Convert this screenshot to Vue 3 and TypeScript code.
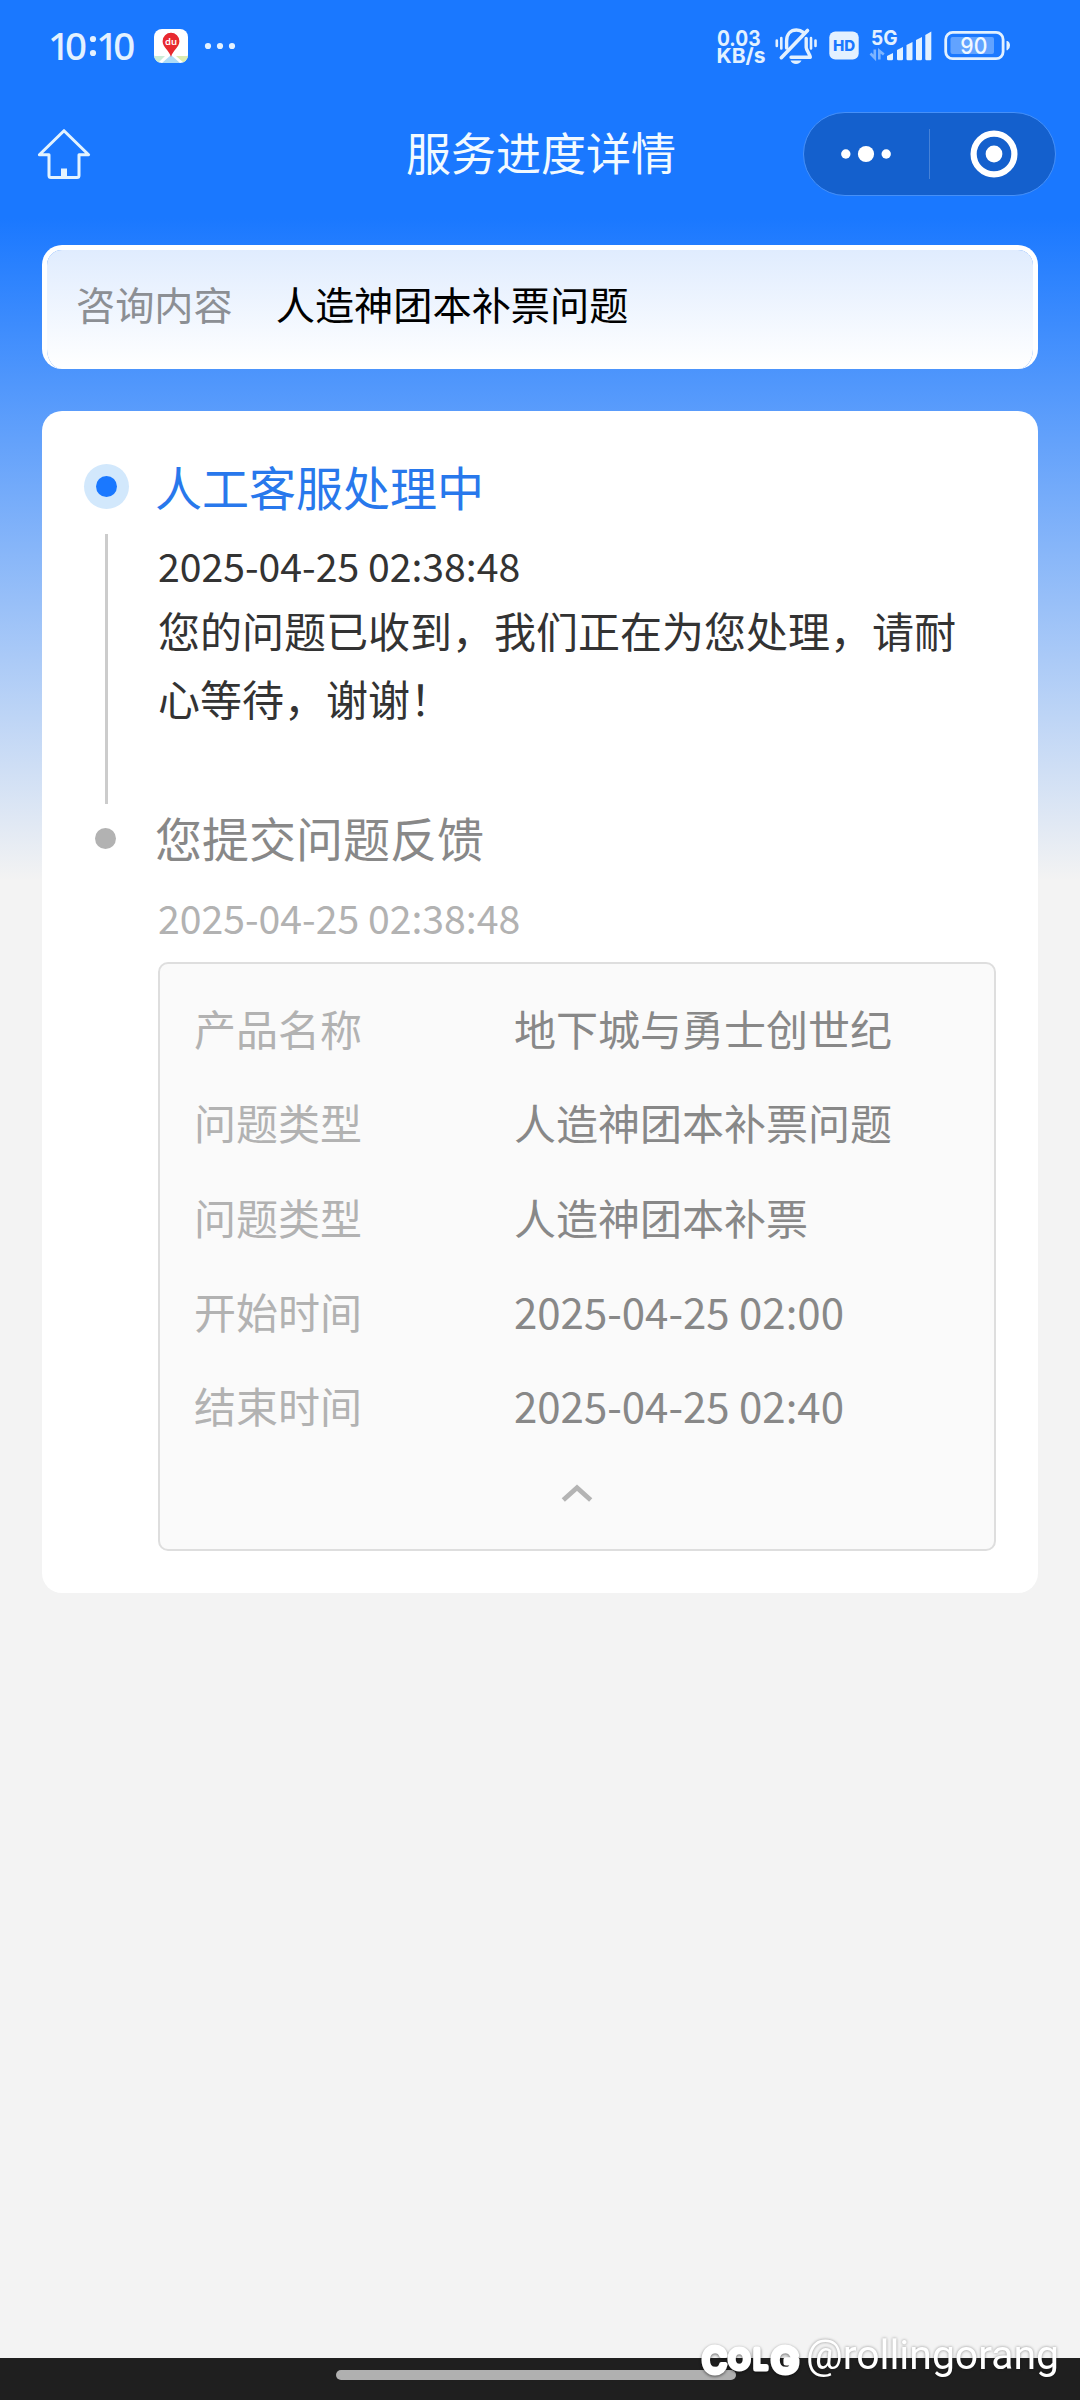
<script setup lang="ts">
import { ref } from 'vue'

interface Field {
  label: string
  value: string
}

const open = ref(true)

const fields: Field[] = [
  { label: '产品名称', value: '地下城与勇士创世纪' },
  { label: '问题类型', value: '人造神团本补票问题' },
  { label: '问题类型', value: '人造神团本补票' },
  { label: '开始时间', value: '2025-04-25 02:00' },
  { label: '结束时间', value: '2025-04-25 02:40' },
]
</script>

<template>
  <div class="screen">
    <header class="status">
      <svg class="clock" width="94" height="64" viewBox="44 14 94 64">
        <g fill="#e3f1ff" font-size="38.5" font-weight="500">
          <text x="48 65" y="59.6">10</text>
          <circle cx="93" cy="39" r="3.1" />
          <circle cx="93" cy="53" r="3.1" />
          <text x="96.3 113.3" y="59.6">10</text>
        </g>
      </svg>
      <svg class="app" width="34" height="34" viewBox="0 0 34 34">
        <defs><clipPath id="appClip"><rect width="34" height="34" rx="8" /></clipPath></defs>
        <g clip-path="url(#appClip)">
          <rect width="34" height="34" fill="#fff" />
          <path d="M0 27H11L4 34H0Z" fill="#c9ecd6" />
          <path d="M17 26L26 34H8Z" fill="#aedcf6" />
          <path d="M22 27H34V34H30Z" fill="#dcecb0" />
          <path d="M17 28C15 21 8.6 18 8.6 12.2A8.4 8.4 0 0 1 25.4 12.2C25.4 18 19 21 17 28Z" fill="#e8292f" />
          <text x="17" y="16" text-anchor="middle" font-size="9.5" font-weight="600" fill="#fff">du</text>
        </g>
      </svg>
      <svg class="more" width="32" height="8" viewBox="0 0 32 8" fill="#e3f1ff">
        <circle cx="4" cy="4" r="3.1" /><circle cx="16" cy="4" r="3.1" /><circle cx="28" cy="4" r="3.1" />
      </svg>

      <svg class="indicators" width="296" height="44" viewBox="716 24 296 44">
        <g fill="#e3f1ff">
          <g font-weight="700" font-size="21.5">
            <text x="717" y="45.8" textLength="43.5" lengthAdjust="spacingAndGlyphs">0.03</text>
            <text x="716.5" y="63.3" font-size="20.5" textLength="49" lengthAdjust="spacingAndGlyphs">KB/s</text>
          </g>
          <g fill="none" stroke="#e3f1ff" stroke-width="3" stroke-linecap="round" stroke-linejoin="round">
            <path d="M776.8 40.5V46M781.3 38V48.5M811 38V48.5M815.5 40.5V46" stroke-width="2.6" />
            <path d="M786.6 48V41C786.6 34 790.8 30 796.5 30C799.3 30 801.6 31 803.2 32.4" stroke-width="3.4" />
            <path d="M806.2 38.5V47.5C806.2 50 809.8 54 810.3 57.3H791" stroke-width="3.4" />
            <path d="M807.5 30.5L781.3 57.7" stroke-width="3.6" />
          </g>
          <path d="M790.5 60.6H801.5C800.5 62.8 798.6 64 796 64S791.5 62.8 790.5 60.6Z" />
          <rect x="829.3" y="31.6" width="29.4" height="28" rx="6" />
          <text x="833" y="51" font-size="14.8" font-weight="800" fill="#1a78ff" textLength="22.2" lengthAdjust="spacingAndGlyphs">HD</text>
          <text x="871" y="44.6" font-size="20.5" font-weight="700" textLength="26.5" lengthAdjust="spacingAndGlyphs">5G</text>
          <g fill="none" stroke="#7db4ff" stroke-width="2.6">
            <path d="M870.5 53.5L874.8 58V49.5M879.3 59.5V50.8L883.8 54.6" />
          </g>
          <path d="M887 56L893 53V59Q893 60.3 891.8 60.3H888.2Q887 60.3 887 59Z" />
          <path d="M897 50L903 47V59Q903 60.3 901.8 60.3H898.2Q897 60.3 897 59Z" />
          <path d="M906.5 45L912.5 42V59Q912.5 60.3 911.3 60.3H907.7Q906.5 60.3 906.5 59Z" />
          <path d="M916 40L922 37V59Q922 60.3 920.8 60.3H917.2Q916 60.3 916 59Z" />
          <path d="M925.3 35L931.3 31.5V59Q931.3 60.3 930.1 60.3H926.5Q925.3 60.3 925.3 59Z" />
          <rect x="945.7" y="32.4" width="57.4" height="26.3" rx="7" fill="none" stroke="#e3f1ff" stroke-width="2.8" />
          <rect x="950.5" y="37" width="43.5" height="17" rx="2" fill="#62a3ff" />
          <text x="960.3" y="54" font-size="23.5" font-weight="500" fill="#f0f8ff" textLength="27" lengthAdjust="spacingAndGlyphs">90</text>
          <path d="M1006.5 41H1007.5Q1010 42 1010 45.5T1007.5 50.3H1006.5Z" />
        </g>
      </svg>
    </header>

    <nav class="nav">
      <svg class="home" width="54" height="52" viewBox="37 128 54 52" fill="none" stroke="#e3f3ff" stroke-width="3" stroke-linejoin="round">
        <path d="M64 130.7L88.6 154.8H79V175.5Q79 177.5 77 177.5H51Q49 177.5 49 175.5V154.8H39.4Z" />
        <path d="M61 168.5H67V177H61Z" fill="#e3f3ff" stroke="none" />
      </svg>
      <h1 class="title">服务进度详情</h1>
      <div class="capsule">
        <div class="half">
          <svg width="50" height="18" viewBox="0 0 50 18" fill="#fff">
            <circle cx="4.8" cy="9" r="4.7" /><circle cx="25" cy="9" r="8.1" /><circle cx="45.2" cy="9" r="4.7" />
          </svg>
        </div>
        <i class="split" />
        <div class="half target">
          <svg width="48" height="48" viewBox="0 0 48 48">
            <circle cx="24" cy="24" r="20.4" fill="none" stroke="#fff" stroke-width="6.2" />
            <circle cx="24" cy="24" r="8.4" fill="#fff" />
          </svg>
        </div>
      </div>
    </nav>

    <main class="content">
      <section class="topic">
        <span class="topic-label">咨询内容</span>
        <span class="topic-text">人造神团本补票问题</span>
      </section>

      <section class="timeline">
        <article class="step current">
          <div class="rail">
            <i class="ring"><i class="dot" /></i>
            <i class="line" />
          </div>
          <div class="body">
            <h2>人工客服处理中</h2>
            <time>2025-04-25 02:38:48</time>
            <p>您的问题已收到，我们正在为您处理，请耐心等待，谢谢！</p>
          </div>
        </article>

        <article class="step past">
          <div class="rail"><i class="dot" /></div>
          <div class="body">
            <h2>您提交问题反馈</h2>
            <time>2025-04-25 02:38:48</time>
            <div class="detail">
              <template v-if="open">
                <div v-for="(f, i) in fields" :key="i" class="row">
                  <span class="k">{{ f.label }}</span>
                  <span class="v">{{ f.value }}</span>
                </div>
              </template>
              <div class="toggle" @click="open = !open">
                <svg width="32" height="20" viewBox="0 0 32 20" fill="none" stroke="#b4b4b4" stroke-width="4.8">
                  <path d="M2.3 17L16 4.8L29.7 17" />
                </svg>
              </div>
            </div>
          </div>
        </article>
      </section>
    </main>

    <footer class="gesture"><i class="pill" /></footer>

    <svg class="mark" width="380" height="60" viewBox="696 2332 380 60">
      <g fill="#fff" stroke="#fff" stroke-width="5" stroke-linejoin="round" font-weight="500" class="logo">
        <text x="702" y="2372.5" font-size="36" textLength="25" lengthAdjust="spacingAndGlyphs">C</text>
        <text x="728.5" y="2369" font-size="27" textLength="21.5" lengthAdjust="spacingAndGlyphs">O</text>
        <text x="753.5" y="2369" font-size="27" textLength="14" lengthAdjust="spacingAndGlyphs">L</text>
        <text x="771" y="2372.5" font-size="36" textLength="28" lengthAdjust="spacingAndGlyphs">G</text>
      </g>
      <text class="user" x="806" y="2369" font-size="41" textLength="253" lengthAdjust="spacingAndGlyphs" fill="#fff">@rollingorang</text>
    </svg>
  </div>
</template>

<style>
body {
  margin: 0;
  background: #f3f3f3;
}
</style>

<style scoped>
.screen {
  position: relative;
  box-sizing: border-box;
  display: flex;
  flex-direction: column;
  width: 1080px;
  height: 2400px;
  overflow: hidden;
  background: linear-gradient(180deg, #1a78ff 0, #1a78ff 218px, #f3f3f3 880px);
  font-family: 'Noto Sans CJK SC', 'Noto Sans', sans-serif;
}
i {
  display: block;
}
svg {
  display: block;
  flex: none;
}
.status {
  display: flex;
  align-items: center;
  height: 92px;
  padding: 0 68px 0 44px;
  font-family: Inter, 'Noto Sans', sans-serif;
}
.clock {
  font-family: 'Noto Sans', sans-serif;
}
.app {
  margin-left: 16px;
  font-family: 'Noto Sans', sans-serif;
}
.more {
  margin-left: 16px;
}
.indicators {
  margin-left: auto;
}
.nav {
  display: flex;
  align-items: center;
  justify-content: space-between;
  height: 124px;
  padding: 0 24px 0 37px;
}
.home {
  margin-right: 204px;
}
.title {
  margin: 0 0 4px;
  font-size: 45px;
  line-height: 60px;
  font-weight: 400;
  color: #f2faff;
  transform: translateX(-8px);
}
.capsule {
  box-sizing: border-box;
  display: flex;
  align-items: center;
  width: 253px;
  height: 84px;
  border: 1px solid #4690f8;
  border-radius: 42px;
  background: #1460cd;
}
.half {
  flex: 1;
  display: flex;
  justify-content: center;
}
.target {
  box-sizing: border-box;
  padding-left: 4px;
  flex: none;
  width: 125px;
}
.split {
  width: 1px;
  height: 50px;
  background: #4682d8;
}
.content {
  display: flex;
  flex-direction: column;
  gap: 42px;
  padding: 29px 42px 0;
}
.topic {
  box-sizing: border-box;
  display: flex;
  align-items: center;
  gap: 43px;
  height: 124px;
  padding: 0 30px 13px 29px;
  border: 5px solid #fff;
  border-bottom-width: 0;
  border-radius: 20px;
  background: linear-gradient(180deg, #e0ecfe, #fff) padding-box;
  font-size: 39.2px;
  line-height: 56px;
}
.topic-label {
  color: #8c8f94;
}
.topic-text {
  color: #000;
}
.timeline {
  box-sizing: border-box;
  height: 1182px;
  padding: 46px 42px 0;
  border-radius: 20px;
  background: #fff;
}
.step {
  display: flex;
}
.current {
  height: 351px;
}
.rail {
  display: flex;
  flex-direction: column;
  align-items: center;
  width: 45px;
  margin-right: 29px;
}
.ring {
  display: flex;
  align-items: center;
  justify-content: center;
  width: 45px;
  height: 45px;
  margin-top: 7px;
  border-radius: 50%;
  background: #d2e8fc;
}
.dot {
  width: 21px;
  height: 21px;
  border-radius: 50%;
  background: #1a78ff;
}
.line {
  width: 3px;
  height: 270px;
  margin-top: 25px;
  background: #ccc;
}
.body {
  flex: 1;
  min-width: 0;
}
h2 {
  margin: -1px 0 0 -3px;
  font-size: 47px;
  line-height: 60px;
  font-weight: 400;
  color: #2878ec;
}
time {
  display: block;
  margin-top: 19px;
  font-size: 39.2px;
  line-height: 60px;
  color: #333;
}
p {
  width: 820px;
  margin: 1px 0 0;
  font-size: 42px;
  line-height: 68px;
  color: #333;
}
.past .dot {
  margin: 20px 2px 0 0;
  background: #b2b2b2;
}
.past h2 {
  color: #888;
}
.past time {
  margin-top: 20px;
  color: #b2b2b2;
}
.detail {
  box-sizing: border-box;
  width: 838px;
  height: 589px;
  margin-top: 15px;
  padding: 17px 34px 0;
  border: 2px solid #dedede;
  border-radius: 10px;
  background: #fafafa;
}
.row {
  display: flex;
  height: 94.3px;
  font-size: 42px;
  line-height: 94.3px;
}
.k {
  width: 320px;
  color: #b2b2b2;
}
.v {
  color: #888;
}
.toggle {
  display: flex;
  justify-content: center;
  padding: 31px 1px 0 0;
}
.gesture {
  display: flex;
  justify-content: center;
  box-sizing: border-box;
  height: 42px;
  margin-top: auto;
  padding-top: 12px;
  background: #1f1f1f;
}
.pill {
  width: 400px;
  height: 10px;
  margin-right: 8px;
  border-radius: 5px;
  background: #b0b0b0;
}
.mark {
  position: absolute;
  right: 4px;
  bottom: 8px;
}
.logo {
  font-family: Inter, sans-serif;
  filter: drop-shadow(0 1px 1.5px rgba(0, 0, 0, 0.55));
}
.user {
  font-family: Roboto, 'Noto Sans', sans-serif;
  filter: drop-shadow(0 0 1.5px rgba(0, 0, 0, 0.4));
}
</style>
